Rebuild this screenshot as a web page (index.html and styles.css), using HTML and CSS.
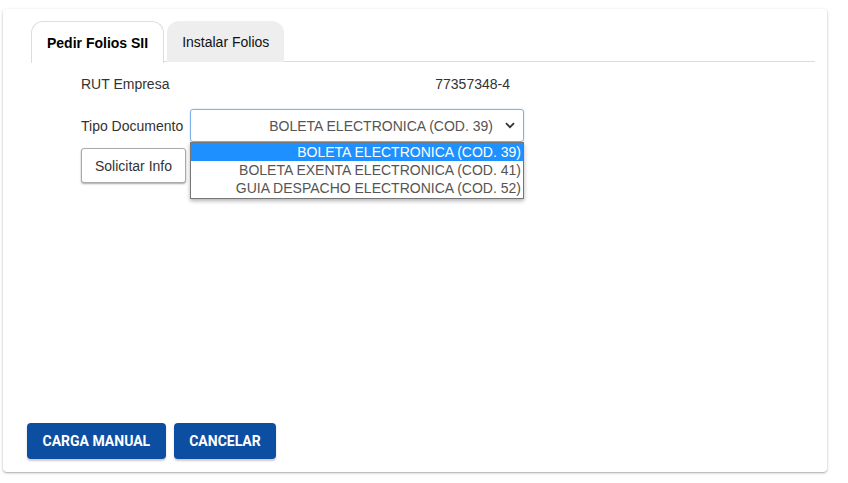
FILE: index.html
```html
<!DOCTYPE html>
<html lang="es">
<head>
<meta charset="utf-8">
<link rel="stylesheet" href="styles.css">
</head>
<body>
<div class="card">
  <div class="tabs">
    <div class="tab active">Pedir Folios SII</div>
    <div class="tab">Instalar Folios</div>
  </div>
  <div class="content">
    <div class="row row-rut">
      <div class="label">RUT Empresa</div>
      <div class="value">77357348-4</div>
    </div>
    <div class="row row-tipo">
      <div class="label">Tipo Documento</div>
      <div class="select-wrap">
        <div class="select">
          <span class="select-text">BOLETA ELECTRONICA (COD. 39)</span>
          <svg class="chev" width="10" height="7" viewBox="0 0 10 7"><path d="M1 1.2 L5 5.2 L9 1.2" fill="none" stroke="#333" stroke-width="1.8"/></svg>
        </div>
        <ul class="options">
          <li class="opt selected">BOLETA ELECTRONICA (COD. 39)</li>
          <li class="opt">BOLETA EXENTA ELECTRONICA (COD. 41)</li>
          <li class="opt">GUIA DESPACHO ELECTRONICA (COD. 52)</li>
        </ul>
      </div>
    </div>
    <div class="row row-btn">
      <button class="btn-plain">Solicitar Info</button>
    </div>
  </div>
  <div class="footer">
    <button class="btn-primary">CARGA MANUAL</button>
    <button class="btn-primary">CANCELAR</button>
  </div>
</div>
</body>
</html>
```

FILE: styles.css
```css
* { box-sizing: border-box; }
html, body { margin: 0; background: #fff; }
body {
  padding: 9px 21px 11px 3px;
  font-family: "Liberation Sans", Arial, sans-serif;
  font-size: 14px;
  color: #333;
}
.card {
  width: 824px;
  height: 463px;
  background: #fff;
  border-radius: 4px;
  box-shadow: 0 1px 3px rgba(0,0,0,0.25), 0 1px 1px rgba(0,0,0,0.12);
  padding: 12px 12px 13px 28px;
  display: flex;
  flex-direction: column;
}
.tabs {
  display: flex;
  gap: 3px;
  height: 41px;
  border-bottom: 1px solid #dcdcdc;
}
.tab {
  height: 41px;
  padding: 0 15px;
  display: flex;
  align-items: center;
  border-radius: 12px 12px 0 0;
  background: #eee;
  color: #111;
  font-size: 14px;
}
.tab.active {
  background: #fff;
  border: 1px solid #ddd;
  border-bottom: none;
  font-weight: bold;
  color: #000;
  height: 42px;
  padding: 0 15px;
}
.content {
  flex: 1;
  padding-left: 50px;
}
.row { display: flex; align-items: center; }
.row-rut { margin-top: 12px; height: 20px; width: 429px; justify-content: space-between; }
.row-tipo { margin-top: 15px; }
.label { width: 109px; color: #333; }
.value { color: #333; }
.select-wrap { position: relative; width: 334px; }
.select {
  height: 33px;
  border: 1px solid #7fb2ea;
  border-radius: 3px;
  display: flex;
  align-items: center;
  justify-content: flex-end;
  padding-right: 8px;
  color: #555;
  box-shadow: 0 0 2px rgba(80,150,230,0.4);
}
.select-text { margin-right: 12px; }
.chev { display: block; }
.options {
  position: absolute;
  top: 33px;
  left: 0;
  width: 334px;
  margin: 0;
  padding: 0 0 1px;
  list-style: none;
  background: #fff;
  border: 1px solid #767676;
  box-shadow: 0 2px 4px rgba(0,0,0,0.3);
  z-index: 2;
}
.opt {
  height: 18px;
  line-height: 18px;
  text-align: right;
  padding-right: 2px;
  color: #555;
  font-size: 14px;
}
.opt.selected { background: #1e90ff; color: #fff; }
.row-btn { margin-top: 6px; }
.btn-plain {
  font-family: "Liberation Sans", Arial, sans-serif;
  font-size: 14px;
  color: #333;
  background: #fff;
  width: 105px;
  height: 35px;
  border: 1px solid #aaa;
  border-radius: 3px;
  box-shadow: 0 1px 2px rgba(0,0,0,0.35);
  padding: 0;
  margin: 0;
}
.footer {
  display: flex;
  gap: 8px;
  margin-left: -4px;
}
.btn-primary {
  font-family: Roboto, "Liberation Sans", sans-serif;
  font-weight: bold;
  font-size: 14px;
  color: #fff;
  background: #0b4ea2;
  border: none;
  border-radius: 4px;
  height: 36px;
  padding: 0 15.5px;
  box-shadow: 0 2px 2px rgba(0,0,0,0.2);
  margin: 0;
}
```
